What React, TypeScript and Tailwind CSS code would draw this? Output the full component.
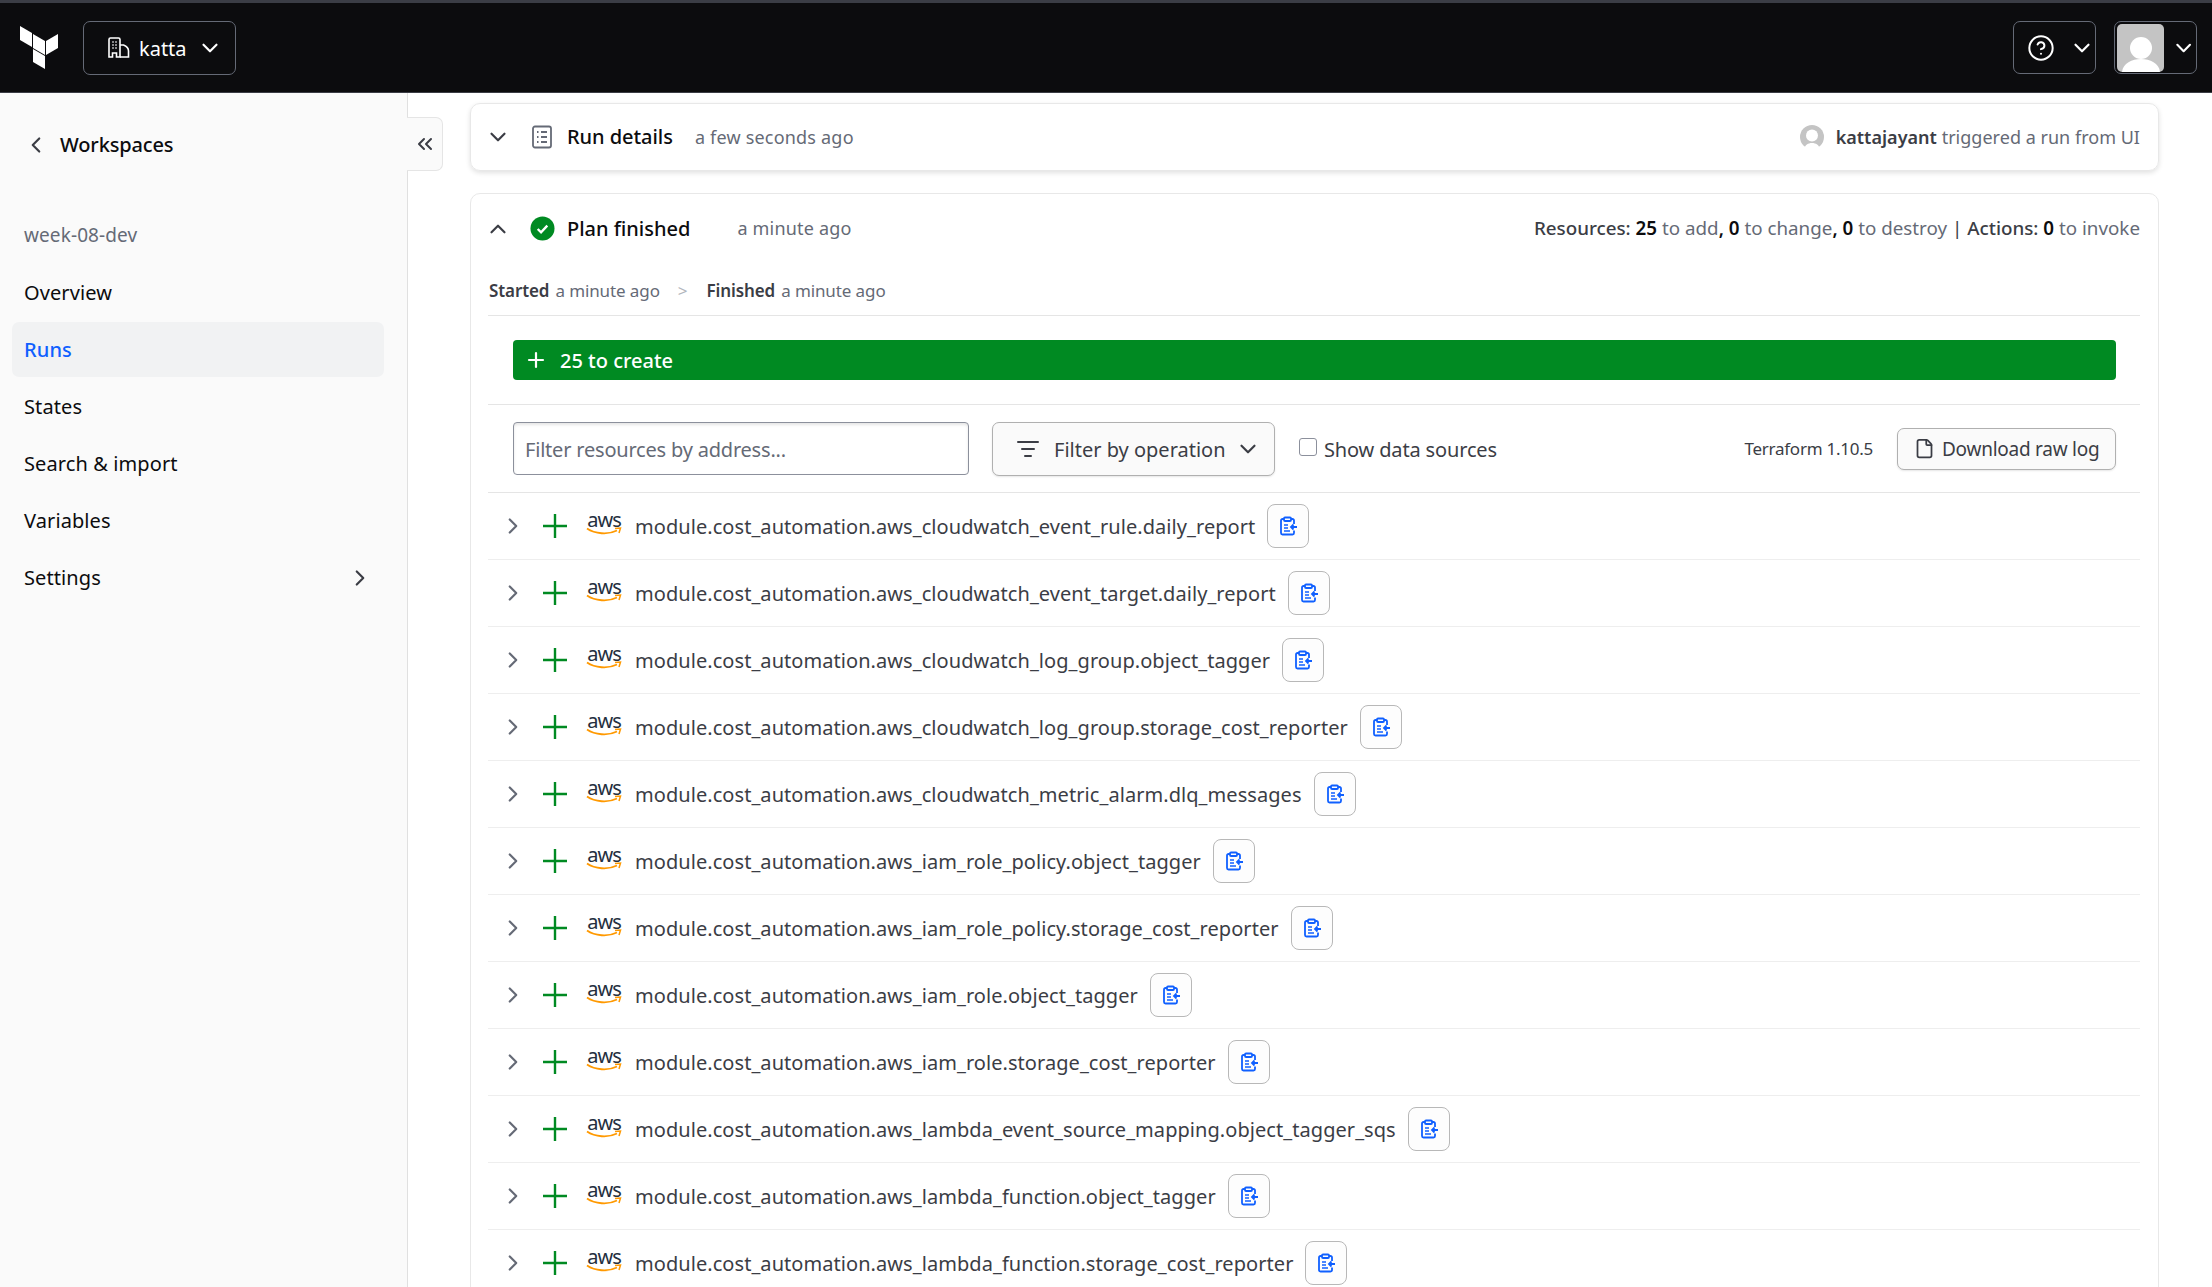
import { ChevronDown, ChevronLeft, ChevronRight, ChevronUp, ChevronsLeft, Plus, CircleHelp, ListFilter, File } from 'lucide-react';

const font = { fontFamily: '"Noto Sans", sans-serif' };

const resources = [
  'module.cost_automation.aws_cloudwatch_event_rule.daily_report',
  'module.cost_automation.aws_cloudwatch_event_target.daily_report',
  'module.cost_automation.aws_cloudwatch_log_group.object_tagger',
  'module.cost_automation.aws_cloudwatch_log_group.storage_cost_reporter',
  'module.cost_automation.aws_cloudwatch_metric_alarm.dlq_messages',
  'module.cost_automation.aws_iam_role_policy.object_tagger',
  'module.cost_automation.aws_iam_role_policy.storage_cost_reporter',
  'module.cost_automation.aws_iam_role.object_tagger',
  'module.cost_automation.aws_iam_role.storage_cost_reporter',
  'module.cost_automation.aws_lambda_event_source_mapping.object_tagger_sqs',
  'module.cost_automation.aws_lambda_function.object_tagger',
  'module.cost_automation.aws_lambda_function.storage_cost_reporter',
];

function TerraformLogo() {
  return (
    <svg width="40" height="44" viewBox="0 0 40 44" fill="#fff">
      <polygon points="0,0 12,7 12,21 0,14" />
      <polygon points="13,8 25,15 25,29 13,22" />
      <polygon points="26,15 38,8 38,22 26,29" />
      <polygon points="13,23 25,30 25,43 13,36" />
    </svg>
  );
}

function BuildingIcon() {
  return (
    <svg width="22" height="22" viewBox="0 0 22 22" fill="none" stroke="#fff" strokeWidth="1.6">
      <path d="M1 20V2.500A1.500 1.500 0 0 1 2.500 1h8A1.500 1.500 0 0 1 12 2.500V20H8.500v-4h-4v4z" />
      <path d="M12 8h3.500c2.500 1 5 3 5 6v6H12" />
      <path d="M4.500 5h1M7.500 5h1M4.500 8h1M7.500 8h1M4.500 11h1M7.500 11h1" strokeWidth="1.800" />
    </svg>
  );
}

function AwsLogo() {
  return (
    <div className="flex flex-col items-center w-[36px] leading-none">
      <span className="text-[20px] leading-[15px] text-[#252f3e] tracking-[-1px]">aws</span>
      <svg width="36" height="9" viewBox="0 0 36 9" fill="none">
        <path d="M1 1.500C9 7 22 8 31 3.500" stroke="#ff9900" strokeWidth="1.800" />
        <path d="M29 1.500l5.500-.5-1.500 5" stroke="#ff9900" strokeWidth="1.500" />
      </svg>
    </div>
  );
}

function ClipboardIcon() {
  return (
    <svg width="20" height="20" viewBox="0 0 20 20" fill="none" stroke="#1060ff" strokeWidth="1.800">
      <path d="M6 3H4.500A1.500 1.500 0 0 0 3 4.500V17a1.500 1.500 0 0 0 1.500 1.500h10A1.500 1.500 0 0 0 16 17v-2.500M16 8V4.500A1.500 1.500 0 0 0 14.500 3H13" />
      <rect x="6" y="1.500" width="7" height="3.500" rx="1" />
      <path d="M6 9h4M6 12h4M6 15h6" strokeWidth="1.500" />
      <path d="M19 11h-6M15.500 8.500L13 11l2.500 2.500" />
    </svg>
  );
}

function GreenPlus() {
  return (
    <svg width="24" height="24" viewBox="0 0 24 24" fill="none" stroke="#008a22" strokeWidth="2.400">
      <path d="M12 0v24M0 12h24" />
    </svg>
  );
}

function ResourceRow({ name }: { name: string }) {
  return (
    <div className="flex items-center h-[67px] border-b border-[#eeeeee] text-[#3b3d45]">
      <ChevronRight className="w-[26px] h-[26px] ml-[12px] text-[#656a76]" strokeWidth={2} />
      <span className="ml-[17px]"><GreenPlus /></span>
      <div className="ml-[19px] mt-[-4px]"><AwsLogo /></div>
      <span className="ml-[13px] mt-[2px] text-[20px] tracking-[0.06px] whitespace-nowrap">{name}</span>
      <button className="ml-[12px] w-[42px] h-[44px] flex items-center justify-center bg-[#fdfdfd] border border-[#b8b8b8] rounded-[8px]">
        <ClipboardIcon />
      </button>
    </div>
  );
}

export default function App() {
  return (
    <div className="w-[2212px] h-[1287px] overflow-hidden flex flex-col bg-white" style={font}>
      <header className="h-[93px] shrink-0 bg-[#0c0c0e] border-t-[3px] border-t-[#3b3d45] border-b border-b-[#3b3d45] flex items-center">
        <div className="ml-[20px]"><TerraformLogo /></div>
        <button className="ml-[23px] w-[153px] h-[54px] rounded-[7px] border border-[#656a76] flex items-center text-white">
          <span className="ml-[24px]"><BuildingIcon /></span>
          <span className="ml-[9px] mt-[3px] text-[20px]">katta</span>
          <ChevronDown className="ml-[10px] w-[26px] h-[26px]" strokeWidth={2} />
        </button>
        <div className="flex-1" />
        <button className="w-[83px] h-[53px] rounded-[7px] border border-[#656a76] flex items-center text-white">
          <CircleHelp className="ml-[13px] w-[28px] h-[28px]" strokeWidth={1.700} />
          <ChevronDown className="ml-[14px] w-[26px] h-[26px]" strokeWidth={2} />
        </button>
        <button className="ml-[18px] mr-[15px] w-[83px] h-[53px] rounded-[7px] border border-[#656a76] flex items-center text-white">
          <span className="ml-[2px] w-[48px] h-[48px] rounded-[5px] bg-[#c4c4c4] overflow-hidden">
            <svg width="48" height="48" viewBox="0 0 48 48" fill="#fff">
              <circle cx="24" cy="24" r="11" />
              <path d="M5 48c1-9 10-13 19-13s18 4 19 13z" />
            </svg>
          </span>
          <ChevronDown className="ml-[7px] w-[26px] h-[26px]" strokeWidth={2} />
        </button>
      </header>

      <div className="flex-1 flex min-h-0">
        <aside className="relative w-[408px] shrink-0 bg-[#fafafa] border-r border-[#e0e0e0] text-[#0c0c0e]">
          <div className="flex items-center h-[22px] mt-[41px] ml-[23px]">
            <ChevronLeft className="w-[26px] h-[26px] text-[#3b3d45]" strokeWidth={2} />
            <span className="ml-[11px] text-[20px] tracking-[-0.15px] font-medium">Workspaces</span>
          </div>
          <div className="mt-[67px] ml-[24px] text-[19px] tracking-[0.1px] text-[#656a76] leading-[24px]">week-08-dev</div>
          <nav className="mt-[18px] pl-[12px] pr-[23px] flex flex-col gap-[2px] text-[20px] tracking-[0.1px]">
            <div className="h-[55px] flex items-center px-[12px]">Overview</div>
            <div className="h-[55px] flex items-center px-[12px] rounded-[7px] bg-[#f1f2f3] text-[#1060ff] font-medium">Runs</div>
            <div className="h-[55px] flex items-center px-[12px]">States</div>
            <div className="h-[55px] flex items-center px-[12px]">Search &amp; import</div>
            <div className="h-[55px] flex items-center px-[12px]">Variables</div>
            <div className="h-[55px] flex items-center justify-between px-[12px]">
              Settings
              <ChevronRight className="w-[26px] h-[26px] text-[#3b3d45] mr-[-1px]" strokeWidth={2} />
            </div>
          </nav>
          {/* tab that sticks out of the sidebar */}
          <button className="absolute left-[407px] top-[24px] w-[36px] h-[54px] bg-[#fafafa] border border-l-0 border-[#e5e5e5] rounded-r-[7px] flex items-center justify-center text-[#3b3d45]">
            <ChevronsLeft className="w-[24px] h-[24px]" strokeWidth={2} />
          </button>
        </aside>

        <main className="flex-1 min-w-0 pt-[10px] pl-[62px] pr-[53px]">
          <section className="h-[68px] rounded-[10px] border border-[#e8e8e8] shadow-[0_2px_5px_rgba(0,0,0,0.12)] flex items-center pl-[17px] pr-[18px]">
            <ChevronDown className="ml-[-3px] w-[26px] h-[26px] text-[#3b3d45]" strokeWidth={2} />
            <svg className="ml-[20px]" width="22" height="24" viewBox="0 0 22 24" fill="none" stroke="#656a76" strokeWidth="1.800">
              <rect x="2" y="1.500" width="18" height="21" rx="2" />
              <path d="M6 7h1.500M10 7h6M6 12h1.500M10 12h6M6 17h1.500M10 17h6" />
            </svg>
            <span className="ml-[14px] text-[20px] tracking-[-0.05px] font-medium text-[#0c0c0e]">Run details</span>
            <span className="ml-[22px] text-[18px] tracking-[0.2px] text-[#656a76]">a few seconds ago</span>
            <div className="flex-1" />
            <svg width="24" height="24" viewBox="0 0 24 24" className="mr-[12px]">
              <circle cx="12" cy="12" r="12" fill="#c4c4c4" />
              <circle cx="12" cy="10.500" r="6" fill="#fff" />
              <path d="M4 24c1-4 4-6 8-6s7 2 8 6z" fill="#fff" />
            </svg>
            <span className="text-[18px] tracking-[0.02px] text-[#3b3d45]">
              <span className="font-semibold">kattajayant</span> <span className="text-[#656a76]">triggered a run from UI</span>
            </span>
          </section>

          <section className="mt-[22px] h-[1200px] rounded-[10px] border border-[#e8e8e8] pl-[17px] pr-[18px]">
            <div className="h-[69px] flex items-center">
              <ChevronUp className="ml-[-3px] w-[26px] h-[26px] text-[#3b3d45]" strokeWidth={2} />
              <svg className="ml-[19px]" width="25" height="25" viewBox="0 0 26 26">
                <circle cx="13" cy="13" r="12.500" fill="#008a22" />
                <path d="M8 13.500l3.500 3.500 6.500-7" fill="none" stroke="#fff" strokeWidth="2.400" />
              </svg>
              <span className="ml-[12px] text-[20px] font-medium text-[#0c0c0e]">Plan finished</span>
              <span className="ml-[47px] text-[18px] tracking-[0.2px] text-[#656a76]">a minute ago</span>
              <div className="flex-1" />
              <span className="text-[18.800px] text-[#656a76]">
                <span className="font-medium text-[#3b3d45]">Resources:</span> <b className="font-semibold text-[#0c0c0e]">25</b> to add<b className="font-semibold text-[#0c0c0e]">,</b> <b className="font-semibold text-[#0c0c0e]">0</b> to change<b className="font-semibold text-[#0c0c0e]">,</b> <b className="font-semibold text-[#0c0c0e]">0</b> to destroy <span className="text-[#3b3d45]">|</span> <span className="font-medium text-[#3b3d45]">Actions:</span> <b className="font-semibold text-[#0c0c0e]">0</b> to invoke
              </span>
            </div>
            <div className="h-[53px] pt-[3px] pl-[1px] flex items-center text-[17px] tracking-[-0.1px] text-[#656a76] border-b border-[#e5e5e5]">
              <span className="font-semibold text-[#3b3d45]">Started</span>
              <span className="ml-[6px]">a minute ago</span>
              <span className="ml-[18px] text-[#b2b6bd]">&gt;</span>
              <span className="ml-[19px] font-semibold text-[#3b3d45]">Finished</span>
              <span className="ml-[6px]">a minute ago</span>
            </div>
            <div className="h-[89px] pl-[25px] pr-[24px] pt-[24px] border-b border-[#e5e5e5]">
              <div className="h-[40px] bg-[#008a22] rounded-[4px] flex items-center text-white">
                <Plus className="ml-[11px] w-[24px] h-[24px]" strokeWidth={2.200} />
                <span className="ml-[12px] mt-[1px] text-[20px] font-medium">25 to create</span>
              </div>
            </div>
            <div className="h-[88px] pl-[25px] pr-[24px] flex items-center border-b border-[#e5e5e5]">
              <div className="w-[456px] h-[53px] pt-[3px] rounded-[4px] border border-[#8c909c] shadow-[inset_0_2px_3px_rgba(0,0,0,0.1)] flex items-center px-[11px] text-[20px] tracking-[-0.2px] text-[#656a76]">
                Filter resources by address...
              </div>
              <button className="ml-[23px] w-[283px] h-[54px] rounded-[7px] border border-[#b0b0b0] bg-[#fafafa] shadow-[0_1px_2px_rgba(0,0,0,0.1)] flex items-center text-[20px] text-[#3b3d45]">
                <ListFilter className="ml-[23px] w-[24px] h-[24px]" strokeWidth={2} />
                <span className="ml-[14px] mt-[3px]">Filter by operation</span>
                <ChevronDown className="ml-[9px] w-[26px] h-[26px]" strokeWidth={2} />
              </button>
              <span className="ml-[24px] mt-[-3px] w-[18px] h-[18px] rounded-[3px] border-[1.5px] border-[#8c909c] bg-white" />
              <span className="ml-[7px] mt-[3px] text-[20px] tracking-[-0.15px] text-[#3b3d45]">Show data sources</span>
              <div className="flex-1" />
              <span className="text-[17px] tracking-[-0.25px] text-[#3b3d45]">Terraform 1.10.5</span>
              <button className="ml-[24px] w-[219px] h-[42px] rounded-[7px] border border-[#b0b0b0] bg-[#fafafa] shadow-[0_1px_2px_rgba(0,0,0,0.1)] flex items-center text-[19px] tracking-[-0.25px] text-[#3b3d45]">
                <File className="ml-[16px] w-[21px] h-[21px]" strokeWidth={2} />
                <span className="ml-[7px] mt-[1px]">Download raw log</span>
              </button>
            </div>
            {resources.map((r) => (
              <ResourceRow key={r} name={r} />
            ))}
          </section>
        </main>
      </div>
    </div>
  );
}
